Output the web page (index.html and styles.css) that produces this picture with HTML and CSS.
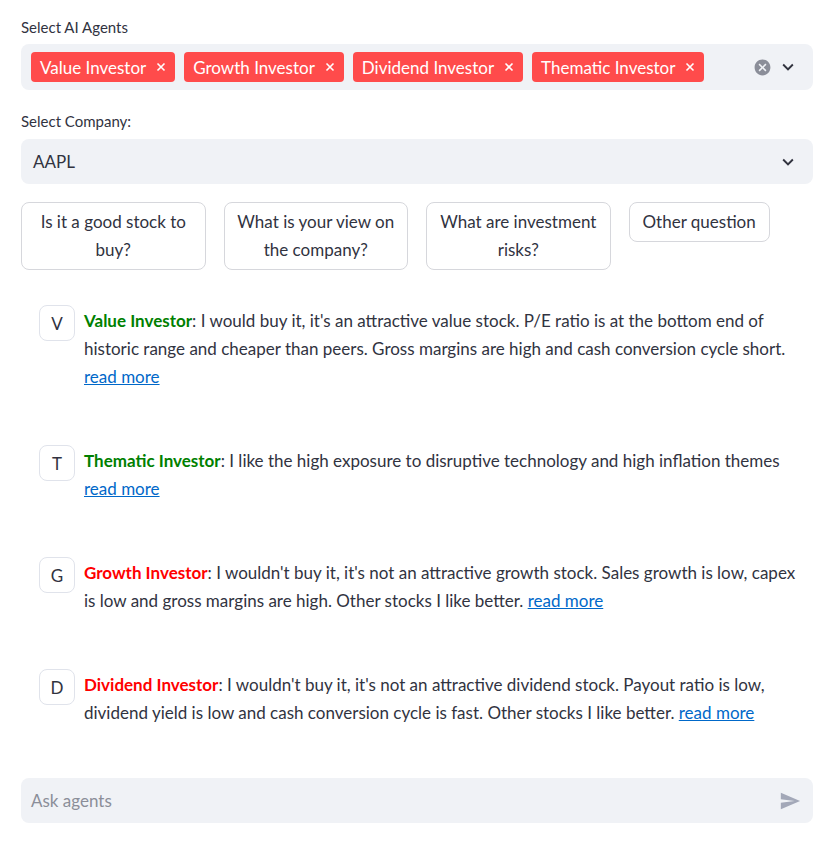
FILE: index.html
```html
<!DOCTYPE html>
<html lang="en">
    <head>
        <meta charset="UTF-8">
        <meta name="viewport" content="width=device-width, initial-scale=1.0">
        <title>AI Investor Agents</title>
        <link rel="stylesheet" href="styles.css">
    </head>
    <body>
        <div class="main">
            <label class="field_label">Select AI Agents</label>
            <div class="multiselect">
                <div class="tags">
                    <span class="tag">Value Investor<svg class="tag_close" viewBox="0 0 10 10"><path d="M1.5 1.5l7 7M8.5 1.5l-7 7"/></svg></span>
                    <span class="tag">Growth Investor<svg class="tag_close" viewBox="0 0 10 10"><path d="M1.5 1.5l7 7M8.5 1.5l-7 7"/></svg></span>
                    <span class="tag">Dividend Investor<svg class="tag_close" viewBox="0 0 10 10"><path d="M1.5 1.5l7 7M8.5 1.5l-7 7"/></svg></span>
                    <span class="tag">Thematic Investor<svg class="tag_close" viewBox="0 0 10 10"><path d="M1.5 1.5l7 7M8.5 1.5l-7 7"/></svg></span>
                </div>
                <svg class="clear_icon" viewBox="0 0 24 24"><path d="M12 2C6.47 2 2 6.470 2 12s4.47 10 10 10 10-4.47 10-10S17.53 2 12 2zm5 13.59L15.59 17 12 13.41 8.41 17 7 15.59 10.59 12 7 8.41 8.41 7 12 10.59 15.59 7 17 8.41 13.41 12 17 15.59z"/></svg>
                <svg class="chevron" viewBox="0 0 24 24"><path d="M16.59 8.59L12 13.17 7.41 8.59 6 10l6 6 6-6z"/></svg>
            </div>

            <label class="field_label second">Select Company:</label>
            <div class="selectbox">
                <span>AAPL</span>
                <svg class="chevron" viewBox="0 0 24 24"><path d="M16.59 8.59L12 13.17 7.41 8.59 6 10l6 6 6-6z"/></svg>
            </div>

            <div class="questions">
                <button class="question">Is it a good stock to buy?</button>
                <button class="question">What is your view on the company?</button>
                <button class="question">What are investment risks?</button>
                <button class="question other">Other question</button>
            </div>

            <div class="messages">
                <div class="message">
                    <div class="avatar">V</div>
                    <p class="message_text"><span class="agent buy">Value Investor</span>: I would buy it, it's an attractive value stock. P/E ratio is at the bottom end of historic range and cheaper than peers. Gross margins are high and cash conversion cycle short. <a href="#">read more</a></p>
                </div>
                <div class="message">
                    <div class="avatar">T</div>
                    <p class="message_text"><span class="agent buy">Thematic Investor</span>: I like the high exposure to disruptive technology and high inflation themes <a href="#">read more</a></p>
                </div>
                <div class="message">
                    <div class="avatar">G</div>
                    <p class="message_text"><span class="agent sell">Growth Investor</span>: I wouldn't buy it, it's not an attractive growth stock. Sales growth is low, capex is low and gross margins are high. Other stocks I like better. <a href="#">read more</a></p>
                </div>
                <div class="message">
                    <div class="avatar">D</div>
                    <p class="message_text"><span class="agent sell">Dividend Investor</span>: I wouldn't buy it, it's not an attractive dividend stock. Payout ratio is low, dividend yield is low and cash conversion cycle is fast. Other stocks I like better. <a href="#">read more</a></p>
                </div>
            </div>

            <div class="chat_input">
                <span class="placeholder">Ask agents</span>
                <svg class="send_icon" viewBox="0 0 24 24"><path d="M2.01 21L23 12 2.01 3 2 10l15 2-15 2z"/></svg>
            </div>
        </div>
    </body>
</html>
```

FILE: styles.css
```css
:root {
    --text-color: #31333F;
    --input-background: #F0F2F6;
    --tag-color: #FF4B4B;
    --border-color: #D6D7DC;
    --avatar-border: #E0E3EB;
    --link-color: #0068C9;
    --muted-color: #8B8E99;
}

body {
    margin: 0;
    font-family: Lato, "Noto Sans", sans-serif;
    color: var(--text-color);
    background: white;
}

.main {
    padding: 16px 19px 0 21px;
}

.field_label {
    display: block;
    font-size: 15px;
    line-height: 22px;
    margin-bottom: 6px;
}

.field_label.second {
    margin-top: 20px;
    margin-bottom: 7px;
}

.multiselect {
    display: flex;
    align-items: center;
    height: 46px;
    background: var(--input-background);
    border-radius: 8px;
    padding: 0 14px 0 10px;
}

.tags {
    display: flex;
    gap: 9px;
    flex: 1;
}

.tag {
    display: flex;
    align-items: center;
    height: 30px;
    padding: 0 9px;
    background: var(--tag-color);
    color: white;
    border-radius: 4px;
    font-size: 17px;
}

.tag_close {
    width: 10px;
    height: 10px;
    margin-left: 10px;
    stroke: white;
    stroke-width: 1.6;
}

.clear_icon {
    width: 19px;
    height: 19px;
    fill: var(--muted-color);
    margin-right: 5px;
}

.chevron {
    width: 22px;
    height: 22px;
    fill: var(--text-color);
}

.selectbox {
    display: flex;
    align-items: center;
    justify-content: space-between;
    height: 45px;
    background: var(--input-background);
    border-radius: 8px;
    padding: 0 14px 0 12px;
    font-size: 17px;
}

.questions {
    display: grid;
    grid-template-columns: repeat(4, 1fr);
    gap: 18px;
    margin-top: 18px;
    align-items: start;
}

.question {
    justify-self: start;
    font-family: inherit;
    font-size: 17px;
    line-height: 28px;
    color: var(--text-color);
    background: white;
    border: 1px solid var(--border-color);
    border-radius: 8px;
    padding: 5px 11px;
}

.question.other {
    padding: 5px 13px;
}

.messages {
    display: flex;
    flex-direction: column;
    gap: 54px;
    margin-top: 35px;
    padding: 0 10px 0 18px;
}

.message {
    display: flex;
    align-items: flex-start;
    gap: 9px;
}

.avatar {
    flex: none;
    box-sizing: border-box;
    width: 36px;
    height: 36px;
    border: 1px solid var(--avatar-border);
    border-radius: 8px;
    display: flex;
    align-items: center;
    justify-content: center;
    font-size: 17px;
}

.message_text {
    margin: 2px 0 0;
    font-size: 17px;
    line-height: 28px;
}

.agent {
    font-weight: bold;
}
.agent.buy {
    color: green;
}
.agent.sell {
    color: red;
}

.message_text a {
    color: var(--link-color);
}

.chat_input {
    display: flex;
    align-items: center;
    justify-content: space-between;
    height: 45px;
    margin-top: 51px;
    background: var(--input-background);
    border-radius: 8px;
    padding: 0 12px 0 10px;
    font-size: 17px;
}

.placeholder {
    color: var(--muted-color);
}

.send_icon {
    width: 22px;
    height: 22px;
    fill: #A3A8B8;
}
```
